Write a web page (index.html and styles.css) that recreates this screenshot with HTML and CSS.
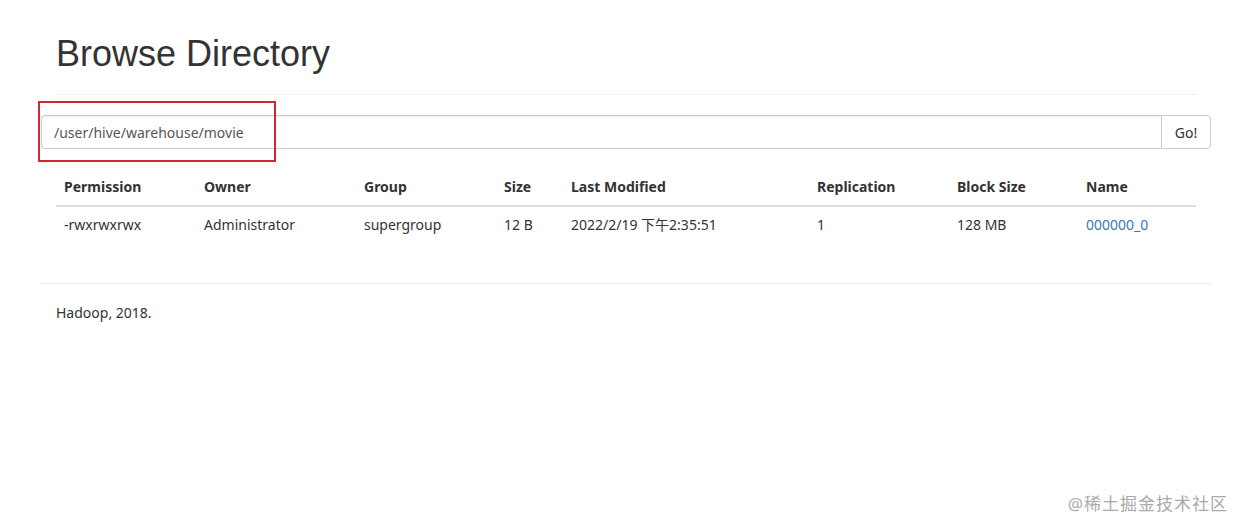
FILE: index.html
```html
<!DOCTYPE html>
<html>
<head>
	<meta charset="utf-8">
	<link rel="stylesheet" href="styles.css">
</head>
<body>
	<div class="container">
		<div class="page-header">
			<h1>Browse Directory</h1>
		</div>
		<div class="path-row">
			<div class="input-group">
				<input type="text" class="path-input" value="/user/hive/warehouse/movie">
				<button class="go-btn">Go!</button>
			</div>
			<div class="highlight"></div>
		</div>
		<table class="listing">
			<thead>
				<tr>
					<th class="c-perm">Permission</th>
					<th class="c-owner">Owner</th>
					<th class="c-group">Group</th>
					<th class="c-size">Size</th>
					<th class="c-mod">Last Modified</th>
					<th class="c-rep">Replication</th>
					<th class="c-block">Block Size</th>
					<th>Name</th>
				</tr>
			</thead>
			<tbody>
				<tr>
					<td>-rwxrwxrwx</td>
					<td>Administrator</td>
					<td>supergroup</td>
					<td>12 B</td>
					<td>2022/2/19 下午2:35:51</td>
					<td>1</td>
					<td>128 MB</td>
					<td><a href="#">000000_0</a></td>
				</tr>
			</tbody>
		</table>
		<hr class="footer-rule">
		<div class="footer">Hadoop, 2018.</div>
	</div>
	<div class="watermark">@稀土掘金技术社区</div>
</body>
</html>
```

FILE: styles.css
```css
* {
	box-sizing: border-box;
}

html, body {
	margin: 0;
	padding: 0;
	background: #fff;
}

body {
	font-family: "Noto Sans", "Noto Sans CJK SC", sans-serif;
	font-size: 14px;
	color: #333;
	width: 1245px;
	height: 531px;
	overflow: hidden;
	position: relative;
}

.container {
	width: 1171px;
	margin-left: 40px;
}

.page-header {
	margin: 0 15px 0 16px;
	padding-top: 34px;
	padding-bottom: 20px;
	border-bottom: 1px solid #eee;
}

h1 {
	margin: 0;
	font-family: "Liberation Sans", Arial, sans-serif;
	font-weight: 400;
	font-size: 36px;
	line-height: 40px;
	color: #333;
}

.path-row {
	position: relative;
	padding-top: 20px;
}

.input-group {
	display: flex;
	margin-left: 1px;
	height: 34px;
}

.path-input {
	flex: 1;
	height: 34px;
	padding: 6px 12px;
	font: inherit;
	font-size: 14px;
	color: #555;
	border: 1px solid #ccc;
	border-right: none;
	border-radius: 4px 0 0 4px;
	box-shadow: inset 0 1px 1px rgba(0,0,0,.075);
	outline: none;
}

.go-btn {
	width: 50px;
	height: 34px;
	font: inherit;
	font-size: 14px;
	color: #333;
	background: #fff;
	border: 1px solid #ccc;
	border-radius: 0 4px 4px 0;
	padding: 0;
}

.highlight {
	position: absolute;
	left: -2px;
	top: 6px;
	width: 238px;
	height: 61px;
	border: 2px solid #d0262d;
}

.listing {
	margin: 22px 15px 0 16px;
	width: 1140px;
	border-collapse: collapse;
}

.listing th, .listing td {
	text-align: left;
	padding: 8px;
	line-height: 20px;
	vertical-align: top;
}

.listing th {
	font-weight: 700;
	border-bottom: 2px solid #ddd;
	padding-top: 6px;
}

.listing td {
	padding-top: 8px;
}

.c-perm { width: 140px; }
.c-owner { width: 160px; }
.c-group { width: 140px; }
.c-size { width: 67px; }
.c-mod { width: 246px; }
.c-rep { width: 140px; }
.c-block { width: 129px; }

.listing a {
	color: #337ab7;
	text-decoration: none;
}

.footer-rule {
	margin: 40px 0 0 0;
	border: 0;
	border-top: 1px solid #eee;
}

.footer {
	padding: 19px 16px;
	line-height: 20px;
}

.watermark {
	position: absolute;
	right: 17px;
	bottom: 16px;
	font-size: 17px;
	color: #aaa;
	letter-spacing: 1px;
}
```
